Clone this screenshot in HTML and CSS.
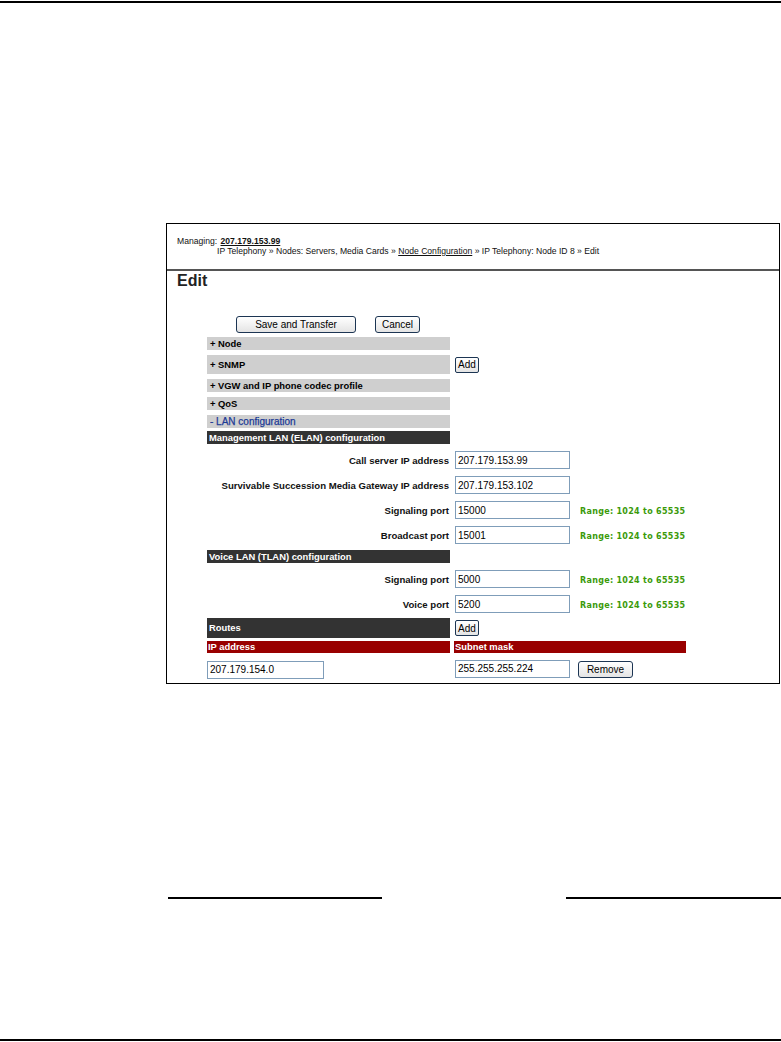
FILE: index.html
```html
<!DOCTYPE html>
<html lang="en">
<head>
    <meta charset="UTF-8">
    <meta name="viewport" content="width=device-width, initial-scale=1.0">
    <title>IP Telephony - Edit</title>
    <link rel="stylesheet" href="styles.css">
</head>
<body>

    <div class="page">
        <div class="rule-top"></div>

        <!-- Screen capture of the Edit page -->
        <div class="figure">
            <div class="crumbs">
                <div>Managing: <a href="#" class="managed">207.179.153.99</a></div>
                <div class="trail">IP Telephony &raquo; Nodes: Servers, Media Cards &raquo; <a href="#">Node Configuration</a> &raquo; IP Telephony: Node ID 8 &raquo; Edit</div>
            </div>
            <div class="divider"></div>
            <h2 class="title">Edit</h2>

            <div class="actions">
                <button class="btn btn-save">Save and Transfer</button>
                <button class="btn btn-cancel">Cancel</button>
            </div>

            <div class="form">
                <div class="sect">+ Node</div>
                <div class="line">
                    <div class="sect tall">+ SNMP</div>
                    <button class="btn btn-add">Add</button>
                </div>
                <div class="sect">+ VGW and IP phone codec profile</div>
                <div class="sect">+ QoS</div>
                <div class="sect open">- LAN configuration</div>
                <div class="band">Management LAN (ELAN) configuration</div>

                <div class="field">
                    <label>Call server IP address</label>
                    <input type="text" value="207.179.153.99">
                </div>
                <div class="field">
                    <label>Survivable Succession Media Gateway IP address</label>
                    <input type="text" value="207.179.153.102">
                </div>
                <div class="field">
                    <label>Signaling port</label>
                    <input type="text" value="15000">
                    <span class="range">Range: 1024 to 65535</span>
                </div>
                <div class="field">
                    <label>Broadcast port</label>
                    <input type="text" value="15001">
                    <span class="range">Range: 1024 to 65535</span>
                </div>

                <div class="band voice">Voice LAN (TLAN) configuration</div>
                <div class="field">
                    <label>Signaling port</label>
                    <input type="text" value="5000">
                    <span class="range">Range: 1024 to 65535</span>
                </div>
                <div class="field">
                    <label>Voice port</label>
                    <input type="text" value="5200">
                    <span class="range">Range: 1024 to 65535</span>
                </div>

                <div class="line">
                    <div class="band tall">Routes</div>
                    <button class="btn btn-add">Add</button>
                </div>
                <div class="line heads">
                    <div class="head">IP address</div>
                    <div class="head wide">Subnet mask</div>
                </div>
                <div class="line routes">
                    <div class="cell"><input type="text" class="ip" value="207.179.154.0"></div>
                    <input type="text" value="255.255.255.224">
                    <button class="btn btn-remove">Remove</button>
                </div>
            </div>
        </div>

        <div class="footer-lines">
            <div class="fline left"></div>
            <div class="fline right"></div>
        </div>

        <div class="rule-bottom"></div>
    </div>

</body>
</html>
```

FILE: styles.css
```css
body {
    margin: 0;
    background: white;
    font-family: "Liberation Sans", Arial, sans-serif;
    overflow: hidden;
}
.page {
    width: 781px;
    height: 1042px;
}
.rule-top {
    margin-top: 1px;
    height: 2px;
    background: black;
}
.figure {
    box-sizing: border-box;
    margin: 220px 0 0 166px;
    width: 614px;
    height: 461px;
    border: 1px solid black;
}
.crumbs {
    padding: 12px 0 0 10px;
    font-size: 8.6px;
    line-height: 10px;
    color: #111;
}
.crumbs a {
    color: #111;
}
.managed {
    font-weight: bold;
    margin-left: 1px;
}
.trail {
    padding-left: 40px;
}
.divider {
    margin-top: 13px;
    height: 2px;
    background: #555;
}
.title {
    margin: 1px 0 0 10px;
    font-size: 16px;
    line-height: 18px;
    color: #222;
}
.actions {
    display: flex;
    gap: 19px;
    margin: 26px 0 0 69px;
}
.btn {
    box-sizing: border-box;
    height: 17px;
    padding: 0;
    border: 1px solid #1c3553;
    border-radius: 3px;
    background: linear-gradient(#ffffff, #e4e4e4);
    font-family: "Liberation Sans", Arial, sans-serif;
    font-size: 10px;
    color: black;
    cursor: pointer;
}
.btn-save {
    width: 120px;
}
.btn-cancel {
    width: 45px;
}
.btn-add {
    width: 24px;
    height: 16px;
    margin-left: 5px;
    border-radius: 2px;
}
.btn-remove {
    width: 55px;
    height: 17px;
    margin: 1px 0 0 8px;
}
.form {
    display: flex;
    flex-direction: column;
    gap: 5px;
    margin: 4px 0 0 40px;
}
.line {
    display: flex;
    align-items: center;
}
.sect {
    box-sizing: border-box;
    width: 243px;
    height: 13px;
    padding-left: 3px;
    background: #cfcfcf;
    font-size: 9.4px;
    font-weight: bold;
    line-height: 13px;
    color: black;
}
.sect.tall {
    height: 19px;
    line-height: 19px;
}
.sect.open {
    color: #1c3a96;
    font-weight: normal;
    font-size: 10px;
    -webkit-text-stroke: 0.25px #1c3a96;
}
.band {
    box-sizing: border-box;
    width: 243px;
    height: 13px;
    margin-top: -2px;
    padding-left: 2px;
    background: #333333;
    font-size: 9.4px;
    font-weight: bold;
    line-height: 13px;
    color: white;
}
.band.voice {
    margin-top: 1px;
}
.band.tall {
    height: 20px;
    line-height: 20px;
    margin-top: 0;
}
.field {
    display: flex;
    align-items: center;
    height: 18px;
    margin-top: 2px;
}
.field label {
    width: 242px;
    margin-right: 6px;
    text-align: right;
    font-size: 9.6px;
    font-weight: bold;
    color: #111;
}
input {
    box-sizing: border-box;
    width: 115px;
    height: 18px;
    padding: 0 2px;
    border: 1px solid #7f9db9;
    font-family: "Liberation Sans", Arial, sans-serif;
    font-size: 10px;
    color: black;
}
.range {
    margin-left: 10px;
    margin-top: 3px;
    font-family: "DejaVu Sans", Verdana, sans-serif;
    font-size: 8px;
    font-weight: bold;
    letter-spacing: 0.3px;
    color: #3b9a0a;
}
.heads {
    gap: 4px;
    margin-top: -2px;
}
.head {
    box-sizing: border-box;
    width: 243px;
    height: 12px;
    padding-left: 1px;
    background: #990000;
    font-size: 9.4px;
    font-weight: bold;
    line-height: 12px;
    color: white;
}
.head.wide {
    width: 232px;
}
.routes {
    margin-top: 1px;
}
.cell {
    width: 248px;
}
.ip {
    width: 117px;
}
.footer-lines {
    display: flex;
    justify-content: space-between;
    margin: 213px 0 0 168px;
}
.fline {
    height: 2px;
    background: black;
}
.fline.left {
    width: 214px;
}
.fline.right {
    width: 215px;
}
.rule-bottom {
    margin-top: 140px;
    height: 2px;
    background: black;
}
```
